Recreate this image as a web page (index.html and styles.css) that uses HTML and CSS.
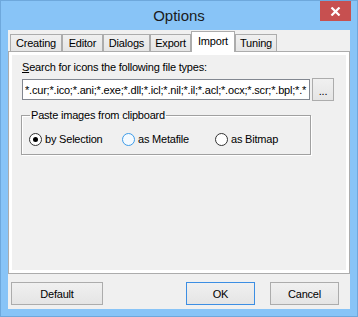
FILE: index.html
```html
<!DOCTYPE html>
<html lang="en">
<head>
    <meta charset="UTF-8">
    <title>Options</title>
    <link rel="stylesheet" href="styles.css">
</head>
<body>

    <div class="window">
        <div class="titlebar">
            <span></span>
            <span class="title">Options</span>
            <button class="close" aria-label="Close">
                <svg width="11" height="9" viewBox="0 0 11 9">
                    <path d="M1.5 0.5 L9.5 8.5 M9.5 0.5 L1.5 8.5" stroke="#fff" stroke-width="2.2" fill="none"/>
                </svg>
            </button>
        </div>

        <div class="client">
            <div class="tabs">
                <div class="tab" style="width: 52px">Creating</div>
                <div class="tab" style="width: 41px">Editor</div>
                <div class="tab" style="width: 47px">Dialogs</div>
                <div class="tab" style="width: 41px">Export</div>
                <div class="tab active" style="width: 44px">Import</div>
                <div class="tab" style="width: 42px">Tuning</div>
            </div>

            <div class="panel">
                <div class="page">
                    <div class="label"><u>S</u>earch for icons the following file types:</div>
                    <div class="file-row">
                        <input class="textbox" type="text" value="*.cur;*.ico;*.ani;*.exe;*.dll;*.icl;*.nil;*.il;*.acl;*.ocx;*.scr;*.bpl;*.*">
                        <button class="btn browse">...</button>
                    </div>

                    <fieldset class="group">
                        <legend>Paste images from clipboard</legend>
                        <div class="radios">
                            <label class="radio"><span class="dot checked"></span>by Selection</label>
                            <label class="radio"><span class="dot hover"></span>as Metafile</label>
                            <label class="radio"><span class="dot"></span>as Bitmap</label>
                        </div>
                    </fieldset>
                </div>
            </div>

            <div class="buttons">
                <button class="btn default">Default</button>
                <span class="spacer"></span>
                <button class="btn ok">OK</button>
                <button class="btn cancel">Cancel</button>
            </div>
        </div>
    </div>

</body>
</html>
```

FILE: styles.css
```css
html, body {
    margin: 0;
    padding: 0;
}
body {
    width: 358px;
    height: 317px;
    overflow: hidden;
    font-family: "Liberation Sans", Arial, sans-serif;
    font-size: 11px;
    letter-spacing: -0.2px;
    color: #000;
}
.window {
    width: 358px;
    height: 317px;
    box-sizing: border-box;
    background-color: #88c4f7;
    border: 1px solid #6ea8dc;
}
.titlebar {
    display: grid;
    grid-template-columns: 1fr auto 1fr;
    height: 29px;
}
.title {
    font-size: 15px;
    letter-spacing: 0;
    line-height: 29px;
    color: #1b1b1b;
}
.close {
    justify-self: end;
    align-self: start;
    width: 31px;
    height: 20px;
    margin-right: 6px;
    padding: 0;
    border: none;
    background-color: #c75050;
    display: flex;
    align-items: center;
    justify-content: center;
}
.client {
    margin: 0 7px;
    height: 279px;
    box-sizing: border-box;
    padding-top: 1px;
    background-color: #f0f0f0;
}

/* pestañas */
.tabs {
    display: flex;
    align-items: flex-end;
    height: 20px;
    padding-left: 2px;
}
.tab {
    box-sizing: border-box;
    height: 17px;
    line-height: 16px;
    text-align: center;
    border: 1px solid #acacac;
    border-bottom: none;
    background: linear-gradient(#f0f0f0, #e5e5e5);
    white-space: nowrap;
}
.tab.active {
    height: 21px;
    line-height: 19px;
    margin-bottom: -1px;
    background: #fff;
    position: relative;
    z-index: 1;
}
.panel {
    height: 223px;
    box-sizing: border-box;
    border: 1px solid #acacac;
    background-color: #fff;
    padding: 3px;
}
.page {
    height: 100%;
    background-color: #f0f0f0;
    padding: 6px 0 0 10px;
    box-sizing: border-box;
}
.label {
    line-height: 13px;
}
.file-row {
    display: flex;
    align-items: center;
    margin-top: 4px;
    height: 23px;
}
.textbox {
    box-sizing: border-box;
    width: 288px;
    height: 21px;
    margin: 0;
    padding: 0 0 0 2px;
    border: 1px solid #828790;
    border-radius: 0;
    background-color: #fff;
    font-family: "Liberation Sans", Arial, sans-serif;
    font-size: 11px;
    letter-spacing: -0.2px;
    color: #000;
    outline: none;
}
.btn {
    box-sizing: border-box;
    font-family: "Liberation Sans", Arial, sans-serif;
    font-size: 11px;
    letter-spacing: -0.2px;
    color: #000;
    border: 1px solid #acacac;
    border-radius: 0;
    background: linear-gradient(#f0f0f0, #e5e5e5);
    padding: 0;
}
.browse {
    width: 22px;
    height: 23px;
    margin-left: 2px;
    line-height: 25px;
}

/* grupo */
.group {
    margin: 8px 0 0 -1px;
    width: 290px;
    box-sizing: border-box;
    padding: 11px 0 8px 7px;
    border: 1px solid #a0a0a0;
    box-shadow: 1px 1px 0 #fff, inset 1px 1px 0 #fff;
}
.group legend {
    padding: 0 1px;
    margin-left: 1px;
    line-height: 13px;
}
.radios {
    display: grid;
    grid-template-columns: 93px 93px auto;
}
.radio {
    display: flex;
    align-items: center;
    line-height: 13px;
}
.dot {
    box-sizing: border-box;
    width: 13px;
    height: 13px;
    border-radius: 50%;
    border: 1px solid #333;
    background-color: #fff;
    margin-right: 3px;
    display: flex;
    align-items: center;
    justify-content: center;
}
.dot.checked::after {
    content: "";
    width: 5px;
    height: 5px;
    border-radius: 50%;
    background-color: #000;
}
.dot.hover {
    border-color: #3c9be8;
    background-color: #f4faff;
}

/* botones */
.buttons {
    display: flex;
    margin-top: 8px;
    padding: 0 11px 0 3px;
}
.buttons .btn {
    height: 23px;
}
.spacer {
    flex: 1;
}
.default {
    width: 92px;
}
.ok {
    width: 69px;
    margin-right: 15px;
    border-color: #3c8ee3;
}
.cancel {
    width: 69px;
}
```
